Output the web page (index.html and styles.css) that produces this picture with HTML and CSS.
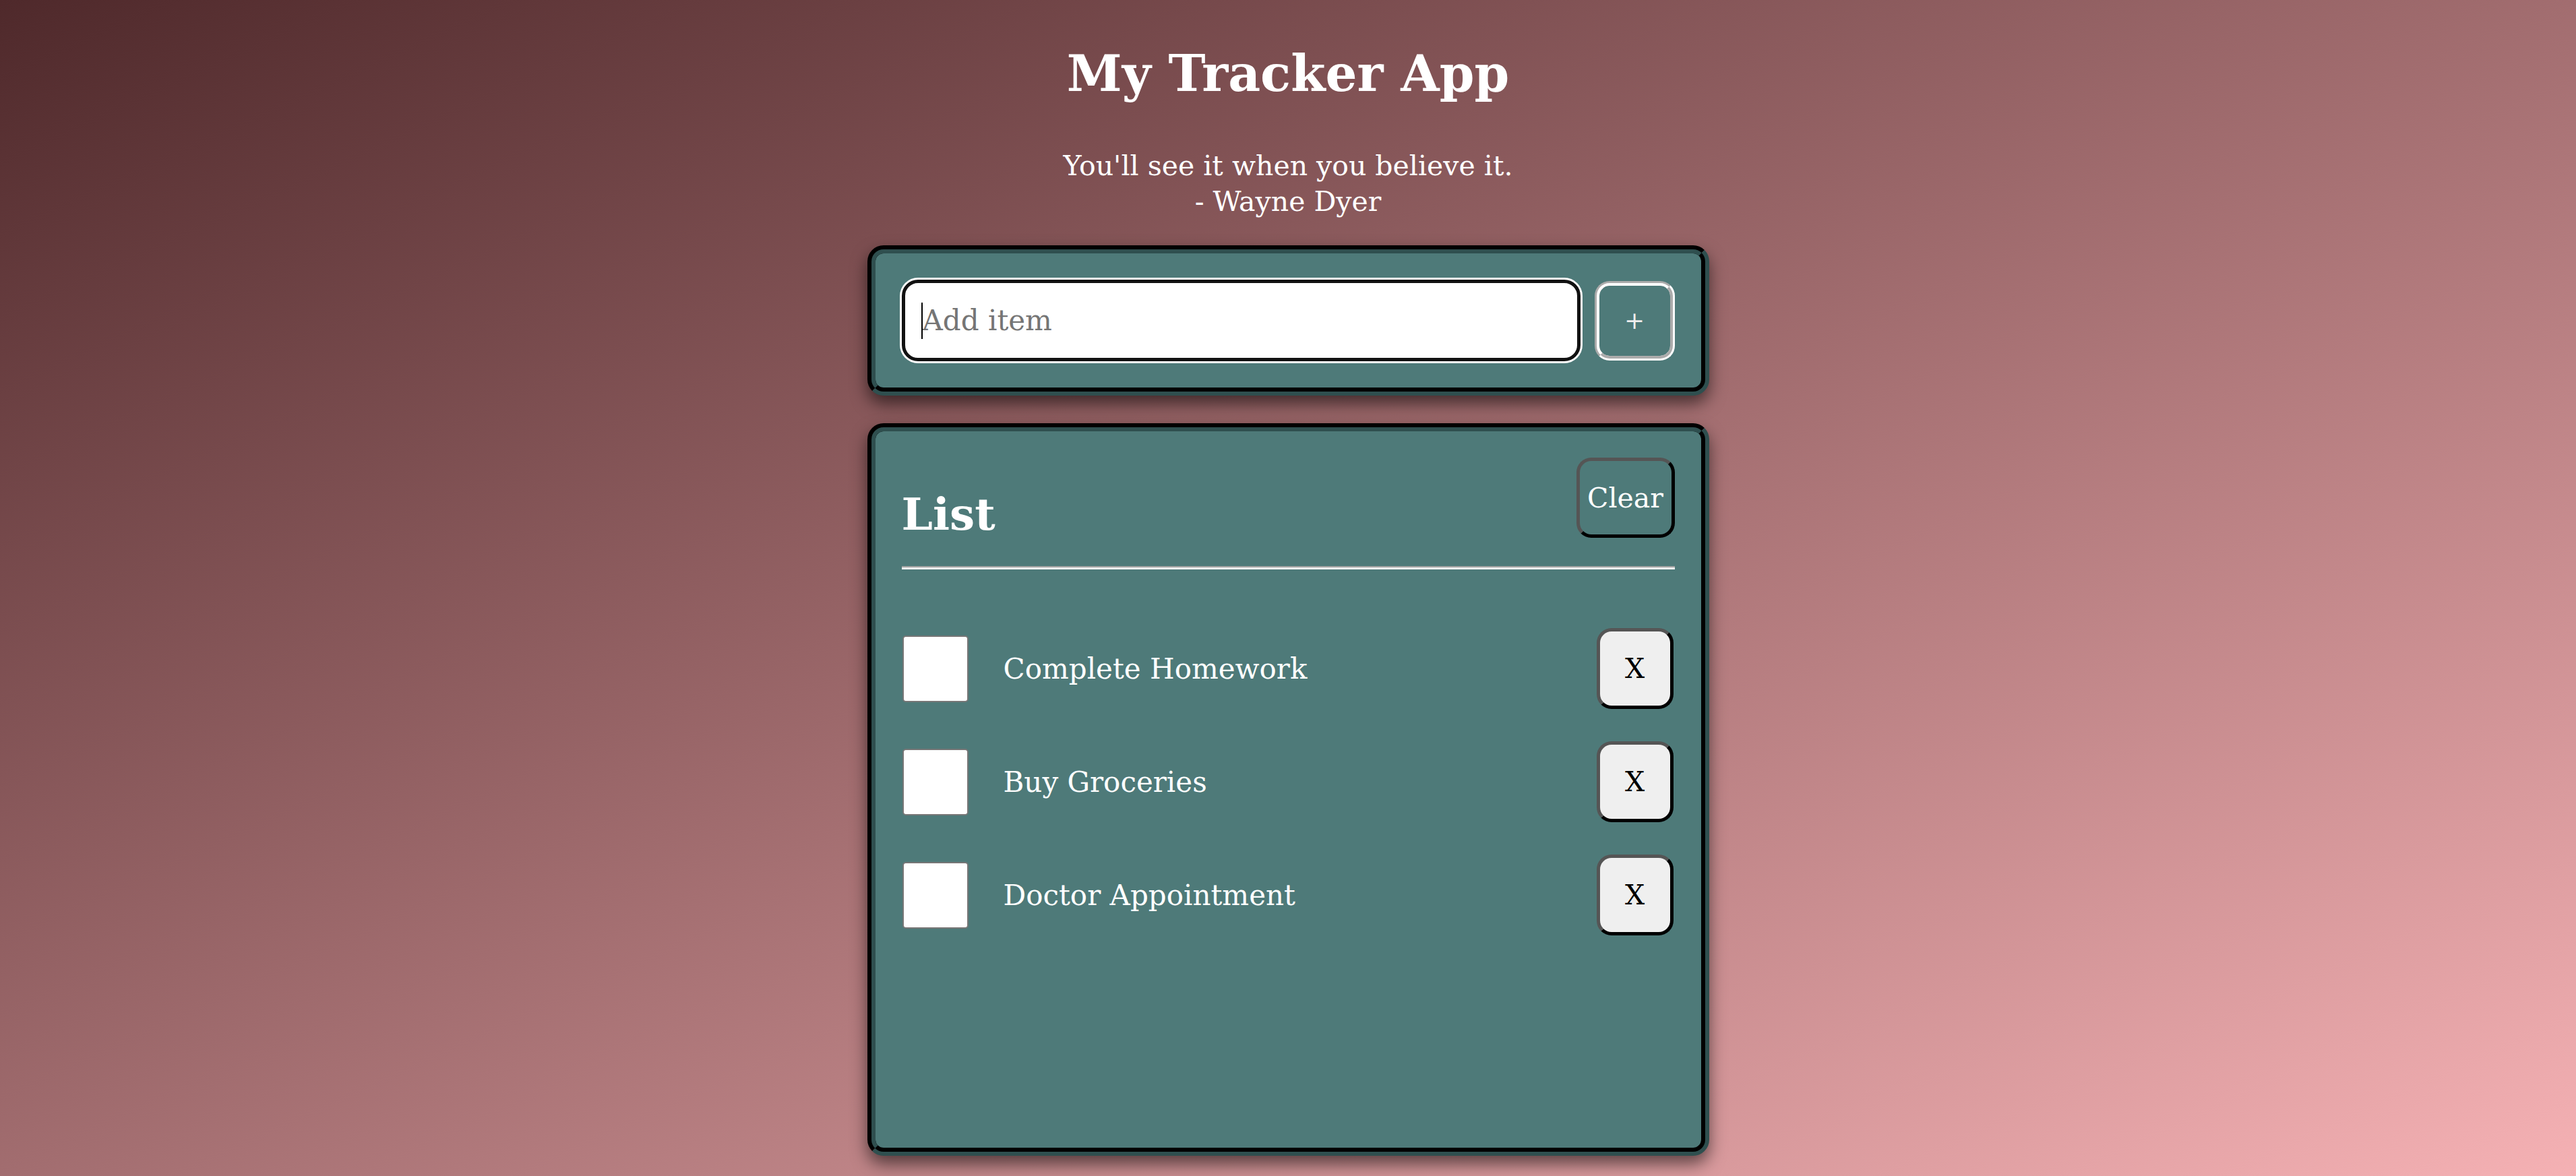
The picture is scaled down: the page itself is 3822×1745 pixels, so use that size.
FILE: index.html
```html
<!DOCTYPE html>
<html lang="en">
<head>
<meta charset="utf-8">
<title>My Tracker App</title>
<link rel="stylesheet" href="styles.css">
</head>
<body>
<main class="app">
  <header class="header">
    <h1 class="title">My Tracker App</h1>
    <p class="quote">You'll see it when you believe it.<br>- Wayne Dyer</p>
  </header>

  <section class="panel add-panel">
    <div class="input-wrap">
      <input class="add-input" type="text" placeholder="Add item">
      <span class="caret"></span>
    </div>
    <button class="add-btn" type="button">+</button>
  </section>

  <section class="panel list-panel">
    <div class="list-head">
      <h2 class="list-title">List</h2>
      <button class="clear-btn" type="button">Clear</button>
    </div>
    <hr class="divider">
    <ul class="items">
      <li class="item">
        <span class="check"></span>
        <span class="item-text">Complete Homework</span>
        <button class="del-btn" type="button">X</button>
      </li>
      <li class="item">
        <span class="check"></span>
        <span class="item-text">Buy Groceries</span>
        <button class="del-btn" type="button">X</button>
      </li>
      <li class="item">
        <span class="check"></span>
        <span class="item-text">Doctor Appointment</span>
        <button class="del-btn" type="button">X</button>
      </li>
    </ul>
  </section>
</main>
</body>
</html>
```

FILE: styles.css
```css
* {
  box-sizing: border-box;
}

html,
body {
  margin: 0;
  padding: 0;
}

body {
  min-height: 100vh;
  background: linear-gradient(to bottom right, #4f292b, #f5b1b4);
  font-family: Georgia, "DejaVu Serif", serif;
  color: #ffffff;
}

.app {
  width: 1249px;
  margin: 0 auto;
  padding-top: 64px;
}

.header {
  text-align: center;
}

.title {
  margin: 0;
  font-size: 74px;
  line-height: 90px;
  font-weight: bold;
}

.quote {
  margin: 66px 0 0;
  font-size: 41px;
  line-height: 53px;
}

.panel {
  background: #4e7a79;
  border: 12px groove #2f4f4f;
  border-radius: 24px;
  padding: 39px;
  box-shadow: 0 12px 24px rgba(0, 0, 0, 0.55);
}

.add-panel {
  margin-top: 38px;
  display: flex;
  align-items: center;
  gap: 21px;
}

.input-wrap {
  flex: 1;
  position: relative;
  display: flex;
}

.add-input {
  flex: 1;
  height: 121px;
  border: 5px solid #111111;
  border-radius: 24px;
  box-shadow: 0 0 0 3px #ffffff;
  outline: none;
  padding: 0 0 0 26px;
  font-family: inherit;
  font-size: 42px;
  color: #000000;
  background: #ffffff;
}

.add-input::placeholder {
  color: #757575;
}

.caret {
  position: absolute;
  left: 29px;
  top: 34px;
  width: 2px;
  height: 54px;
  background: #000000;
}

.add-btn {
  width: 119px;
  height: 118px;
  border: 7px groove #ffffff;
  border-radius: 22px;
  background: transparent;
  color: #eeeeee;
  font-family: inherit;
  font-size: 36px;
  padding: 0;
}

.list-panel {
  margin-top: 41px;
  height: 1087px;
}

.list-head {
  display: flex;
  justify-content: space-between;
  align-items: flex-start;
}

.list-title {
  margin: 48px 0 0;
  font-size: 66px;
  line-height: 72px;
  font-weight: bold;
}

.clear-btn {
  width: 146px;
  height: 119px;
  border: 5px solid;
  border-color: #555555 #000000 #000000 #555555;
  border-radius: 22px;
  background: transparent;
  color: #ffffff;
  font-family: inherit;
  font-size: 41px;
  padding: 0;
}

.divider {
  margin: 41px 0 0;
  height: 0;
  border: 0;
  border-top: 2px solid #a6a6a6;
  border-bottom: 3px solid #f0f0f0;
}

.items {
  list-style: none;
  margin: 87px 0 0;
  padding: 0;
  display: flex;
  flex-direction: column;
  gap: 48px;
}

.item {
  display: flex;
  align-items: center;
  height: 120px;
}

.check {
  width: 98px;
  height: 99px;
  background: #ffffff;
  border: 2px solid #767676;
  border-radius: 5px;
  margin-left: 1px;
  margin-right: 52px;
  flex-shrink: 0;
}

.item-text {
  font-size: 42px;
  color: #ffffff;
}

.del-btn {
  margin-left: auto;
  margin-right: 2px;
  width: 114px;
  height: 120px;
  border: 5px solid;
  border-color: #555555 #000000 #000000 #555555;
  border-radius: 22px;
  background: #efefef;
  color: #000000;
  font-family: inherit;
  font-size: 41px;
  padding: 0;
}
```
